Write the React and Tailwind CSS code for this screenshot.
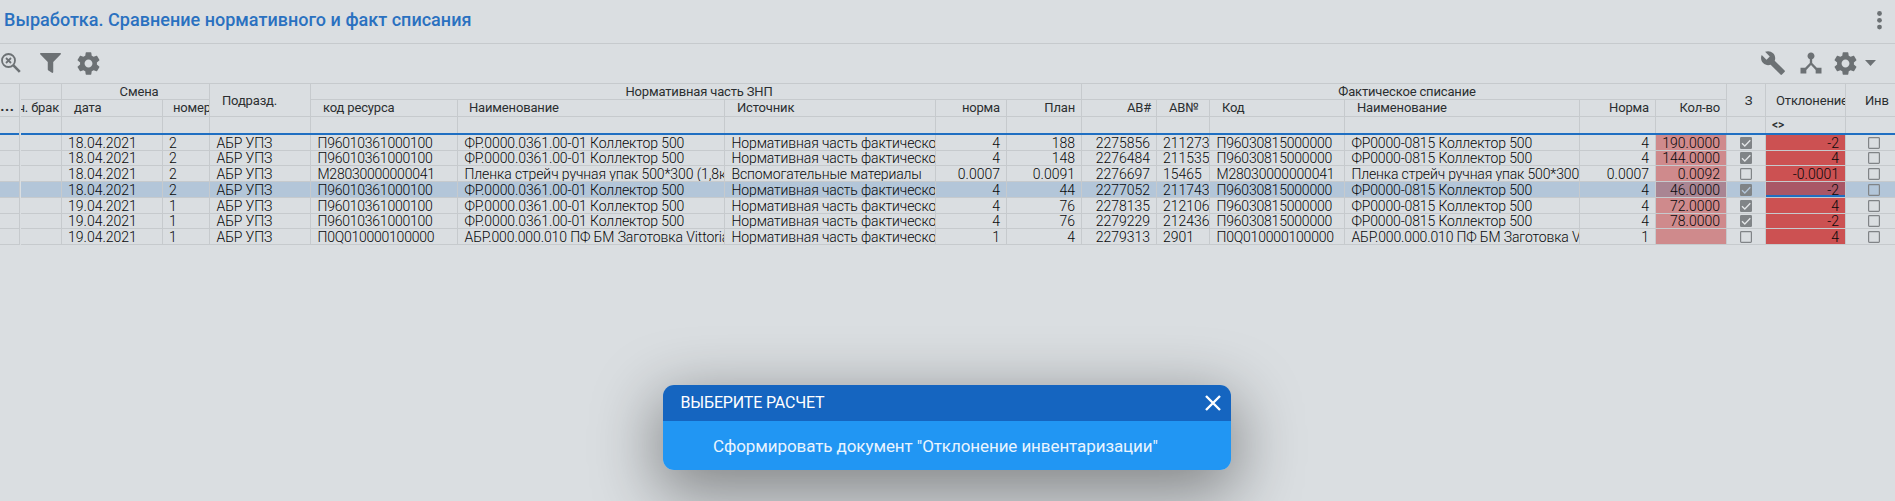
const LINE = 'border-[#c6cacd]';

const COLS = [
  { w: 'w-[41px]', k: 'empty' },
  { w: 'w-[101px]', k: 'date' },
  { w: 'w-[47px]', k: 'shift' },
  { w: 'w-[101px]', k: 'dept', track: 'tracking-[-0.12px]' },
  { w: 'w-[147px]', k: 'code', track: 'tracking-[-0.24px]' },
  { w: 'w-[267px]', k: 'name', track: 'tracking-[-0.1px]' },
  { w: 'w-[211px]', k: 'source', track: 'tracking-[-0.12px]' },
  { w: 'w-[71px]', k: 'norm', right: true },
  { w: 'w-[75px]', k: 'plan', right: true },
  { w: 'w-[75px]', k: 'ab', right: true },
  { w: 'w-[53px]', k: 'abn' },
  { w: 'w-[135px]', k: 'fcode', track: 'tracking-[-0.2px]' },
  { w: 'w-[235px]', k: 'fname', track: 'tracking-[-0.14px]' },
  { w: 'w-[76px]', k: 'fnorm', right: true },
  { w: 'w-[71px]', k: 'qty', right: true },
  { w: 'w-[39px]', k: 'z' },
  { w: 'w-[80px]', k: 'dev', right: true },
  { w: 'w-[50px]', k: 'inv' },
];

const N1 = 'ФР.0000.0361.00-01 Коллектор 500';
const N2 = 'ФР0000-0815 Коллектор 500';
const S = 'Нормативная часть фактического';
const P1 = 'П96010361000100';
const P2 = 'П96030815000000';
const FILM = 'Пленка стрейч ручная упак 500*300 (1,8кг)';
const BILLET = 'АБР.000.000.010 ПФ БМ Заготовка Vittoria';

const mk = (h, date, shift, code, name, source, norm, plan, ab, abn, fcode, fname, fnorm, qty, z, dev) => ({
  h, empty: '', date, shift, dept: 'АБР УПЗ', code, name, source, norm, plan, ab, abn, fcode, fname, fnorm, qty, z, dev, inv: false,
});

const ROWS = [
  mk('h-4', '18.04.2021', '2', P1, N1, S, '4', '188', '2275856', '211273', P2, N2, '4', '190.0000', true, '-2'),
  mk('h-[15px]', '18.04.2021', '2', P1, N1, S, '4', '148', '2276484', '211535', P2, N2, '4', '144.0000', true, '4'),
  mk('h-4', '18.04.2021', '2', 'М28030000000041', FILM, 'Вспомогательные материалы', '0.0007', '0.0091', '2276697', '15465', 'М28030000000041', FILM, '0.0007', '0.0092', false, '-0.0001'),
  mk('h-4', '18.04.2021', '2', P1, N1, S, '4', '44', '2277052', '211743', P2, N2, '4', '46.0000', true, '-2'),
  mk('h-4', '19.04.2021', '1', P1, N1, S, '4', '76', '2278135', '212106', P2, N2, '4', '72.0000', true, '4'),
  mk('h-[15px]', '19.04.2021', '1', P1, N1, S, '4', '76', '2279229', '212436', P2, N2, '4', '78.0000', true, '-2'),
  mk('h-4', '19.04.2021', '1', 'П0Q010000100000', BILLET, S, '1', '4', '2279313', '2901', 'П0Q010000100000', BILLET, '1', '', false, '4'),
];

function Check({ on, dim }) {
  return (
    <svg viewBox="0 0 12 12" className="ml-[13px] h-3 w-3 shrink-0">
      {on ? (
        <>
          <rect width="12" height="12" rx="1.2" fill="#808487" />
          <path d="M2 6.2 4.8 9 10.3 3.3" fill="none" stroke={dim ? '#b3c6d9' : '#e4e7e9'} strokeWidth="1.3" />
        </>
      ) : (
        <rect x="0.6" y="0.6" width="10.8" height="10.8" rx="0.8" fill="none" stroke="#808487" strokeWidth="1.2" />
      )}
    </svg>
  );
}

function Cell({ col, row, selected }) {
  const base = `${col.w} ${LINE} flex shrink-0 items-center overflow-hidden whitespace-nowrap border-b `;
  if (col.k === 'z' || col.k === 'inv') {
    return (
      <div className={base + (col.k === 'z' ? 'border-r' : 'pl-[9px]')}>
        <Check on={row[col.k]} dim={selected} />
      </div>
    );
  }
  let bg = '';
  if (col.k === 'qty') bg = selected ? ' bg-[#a98593]' : ' bg-[#cf8a8c]';
  if (col.k === 'dev') bg = selected ? ' bg-[#a95766] shadow-[inset_0_-2px_0_#1f6fc2]' : ' bg-[#cc5152]';
  return (
    <div className={base + 'border-r ' + (col.right ? 'justify-end pr-1.5 ' : col.track ? 'pl-[6.5px] ' : 'pl-1.5 ') + (col.track || '') + bg}>
      <span className="leading-4">{row[col.k]}</span>
    </div>
  );
}

function Head({ className, children }) {
  return <div className={`${LINE} flex shrink-0 overflow-hidden whitespace-nowrap border-b border-r ${className}`}>{children}</div>;
}

const GEAR =
  'M19.43 12.98c.04-.32.07-.64.07-.98s-.03-.66-.07-.98l2.11-1.65c.19-.15.24-.42.12-.64l-2-3.46c-.12-.22-.39-.3-.61-.22l-2.49 1c-.52-.4-1.08-.73-1.69-.98l-.38-2.65C14.46 2.18 14.25 2 14 2h-4c-.25 0-.46.18-.49.42l-.38 2.65c-.61.25-1.17.59-1.69.98l-2.49-1c-.23-.09-.49 0-.61.22l-2 3.46c-.13.22-.07.49.12.64l2.11 1.65c-.04.32-.07.65-.07.98s.03.66.07.98l-2.11 1.65c-.19.15-.24.42-.12.64l2 3.46c.12.22.39.3.61.22l2.49-1c.52.4 1.08.73 1.69.98l.38 2.65c.03.24.24.42.49.42h4c.25 0 .46-.18.49-.42l.38-2.65c.61-.25 1.17-.59 1.69-.98l2.49 1c.23.09.49 0 .61-.22l2-3.46c.12-.22.07-.49-.12-.64l-2.11-1.65zM12 15.5c-1.93 0-3.5-1.57-3.5-3.5s1.57-3.5 3.5-3.5 3.5 1.57 3.5 3.5-1.57 3.5-3.5 3.5z';

function Toolbar() {
  return (
    <div className="flex h-10 items-center border-b border-[#c6cacd] pb-px text-[#6c7174]">
      <svg viewBox="0 0 20 20" className="ml-px h-5 w-5" fill="none" stroke="currentColor">
        <circle cx="7.5" cy="7.5" r="6.5" strokeWidth="1.8" />
        <path d="m5 5 5 5M10 5l-5 5" strokeWidth="1.8" />
        <path d="m12.2 12.2 6.6 6.6" strokeWidth="2.6" />
      </svg>
      <svg viewBox="0 0 20 20" className="ml-[19px] h-5 w-[21px]" fill="currentColor" preserveAspectRatio="none">
        <path d="M.8 0h18.4c.8 0 1 .8.6 1.3L12.6 9v10c0 .8-.6 1.2-1.2.8L8 17.6c-.4-.3-.6-.6-.6-1V9L.2 1.3C-.2.8 0 0 .8 0z" />
      </svg>
      <svg viewBox="0 0 24 24" className="ml-3.5 h-[27px] w-[27px]" fill="currentColor"><path d={GEAR} /></svg>
      <div className="flex-1" />
      <svg viewBox="0 0 24 24" className="h-[26px] w-[26px]" fill="currentColor">
        <path d="M22.7 19l-9.1-9.1c.9-2.3.4-5-1.5-6.9-2-2-5-2.4-7.4-1.3L9 6 6 9 1.6 4.7C.4 7.1.9 10.1 2.9 12.1c1.9 1.9 4.6 2.4 6.9 1.5l9.1 9.1c.4.4 1 .4 1.4 0l2.3-2.3c.5-.4.5-1.1.1-1.4z" />
      </svg>
      <svg viewBox="0 0 24 24" className="ml-[11px] h-7 w-7" fill="currentColor">
        <path d="M17 16l-4-4V8.82C14.16 8.4 15 7.3 15 6c0-1.66-1.34-3-3-3S9 4.34 9 6c0 1.3.84 2.4 2 2.82V12l-4 4H3v5h5v-3.05l4-4.2 4 4.2V21h5v-5h-4z" />
      </svg>
      <svg viewBox="0 0 24 24" className="ml-[7px] h-[27px] w-[27px]" fill="currentColor"><path d={GEAR} /></svg>
      <svg viewBox="0 0 11 6" className="mr-[19px] ml-[6px] h-1.5 w-[11px]" fill="currentColor"><path d="M0 0h11L5.5 6z" /></svg>
    </div>
  );
}

const SUB = 'h-[17px] pl-3';

function Group({ title, pad, children }) {
  return (
    <div className="shrink-0">
      <Head className={`h-4 justify-center ${pad}`}>{title}</Head>
      <div className="flex">{children}</div>
    </div>
  );
}

function TableHead() {
  return (
    <div className="flex text-[13px] leading-[15px] tracking-[-0.16px]">
      <div className="w-[41px] shrink-0">
        <Head className="h-4" />
        <Head className="h-[17px] justify-end pr-0.5">ч. брак</Head>
      </div>
      <Group title="Смена" pad="pl-[7px]">
        <Head className={SUB + ' w-[101px]'}>дата</Head>
        <Head className="h-[17px] w-[47px] pl-2.5">номер</Head>
      </Group>
      <Head className="h-[33px] w-[101px] items-center pl-3">Подразд.</Head>
      <Group title="Нормативная часть ЗНП" pad="pl-1.5">
        <Head className={SUB + ' w-[147px]'}>код ресурса</Head>
        <Head className="h-[17px] w-[267px] pl-[11px]">Наименование</Head>
        <Head className={SUB + ' w-[211px]'}>Источник</Head>
        <Head className="h-[17px] w-[71px] justify-end pr-1.5">норма</Head>
        <Head className="h-[17px] w-[75px] justify-end pr-1.5">План</Head>
      </Group>
      <Group title="Фактическое списание" pad="pl-1.5">
        <Head className="h-[17px] w-[75px] justify-end pr-[5px]">АВ#</Head>
        <Head className={SUB + ' w-[53px]'}>АВ№</Head>
        <Head className={SUB + ' w-[135px]'}>Код</Head>
        <Head className="h-[17px] w-[235px] pl-3">Наименование</Head>
        <Head className="h-[17px] w-[76px] justify-end pr-1.5">Норма</Head>
        <Head className="h-[17px] w-[71px] justify-end pr-1.5">Кол-во</Head>
      </Group>
      <Head className="h-[33px] w-[39px] items-center justify-center pl-[5px]">З</Head>
      <Head className="h-[33px] w-20 items-center pl-2.5">Отклонение</Head>
      <div className="flex h-[33px] w-[50px] items-center border-b border-[#c6cacd] pl-[19px]">Инв</div>
    </div>
  );
}

export default function App() {
  return (
    <div className="relative h-[501px] w-[1895px] overflow-hidden bg-[#dadee1] font-[Roboto,sans-serif] text-[#2b2e30]">
      <header className="flex h-11 items-center border-b border-[#c6cacd] pl-1">
        <h1 className="-mt-1 flex-1 text-[18px] font-medium tracking-[0.02px] text-[#2a71c0]">Выработка. Сравнение нормативного и факт списания</h1>
        <svg viewBox="0 0 5 19" className="-mt-0.5 mr-[13px] h-[19px] w-[5px]" fill="#6c7174">
          <circle cx="2.5" cy="2.5" r="2.4" />
          <circle cx="2.5" cy="9.3" r="2.4" />
          <circle cx="2.5" cy="16.1" r="2.4" />
        </svg>
      </header>
      <Toolbar />
      <div className="flex">
        <div className="mr-px w-5 shrink-0 border-r border-[#c6cacd]">
          <div className="flex h-[33px] items-end border-b border-[#c6cacd] text-[17px] leading-[21px] font-medium">...</div>
          <div className="h-[18px] border-b-2 border-[#1f6fc2]" />
          {ROWS.map((r, i) => (
            <div key={i} className={`${r.h} border-b border-[#c6cacd] ${i === 3 ? 'bg-[#b3c6d9]' : ''}`} />
          ))}
        </div>
        <div className="flex-1">
          <TableHead />
          <div className="flex h-[18px] border-b-2 border-[#1f6fc2]">
            {COLS.map((c) => (
              <div key={c.k} className={`${c.w} shrink-0 border-[#c6cacd] ${c.k === 'inv' ? '' : 'border-r'} ${c.k === 'dev' ? 'pl-1.5 text-[12px] font-medium leading-4' : ''}`}>
                {c.k === 'dev' ? '<>' : ''}
              </div>
            ))}
          </div>
          <div className="text-[14px] font-light text-[#08090a]">
            {ROWS.map((r, i) => (
              <div key={i} className={`flex ${r.h} ${i === 3 ? 'bg-[#b3c6d9]' : ''}`}>
                {COLS.map((c) => (
                  <Cell key={c.k} col={c} row={r} selected={i === 3} />
                ))}
              </div>
            ))}
          </div>
        </div>
      </div>
      <div className="absolute top-[385px] left-[663px] h-[85px] w-[568px] rounded-[11px] shadow-[0_18px_65px_6px_rgba(0,0,0,0.4)]">
        <div className="flex h-9 items-center rounded-t-[11px] bg-[#1565c0] pr-2.5 pl-[17.5px] text-white">
          <span className="flex-1 text-[16px] tracking-[-0.16px]">ВЫБЕРИТЕ РАСЧЕТ</span>
          <svg viewBox="0 0 16 16" className="h-4 w-4" stroke="currentColor" strokeWidth="2.4">
            <path d="m1 1 14 14M15 1 1 15" />
          </svg>
        </div>
        <div className="flex h-[49px] items-center rounded-b-[11px] bg-[#2196f3] pt-0.5 pl-[50px] text-[17px] tracking-[-0.09px] text-[#e9f4fe]">
          Сформировать документ "Отклонение инвентаризации"
        </div>
      </div>
    </div>
  );
}
